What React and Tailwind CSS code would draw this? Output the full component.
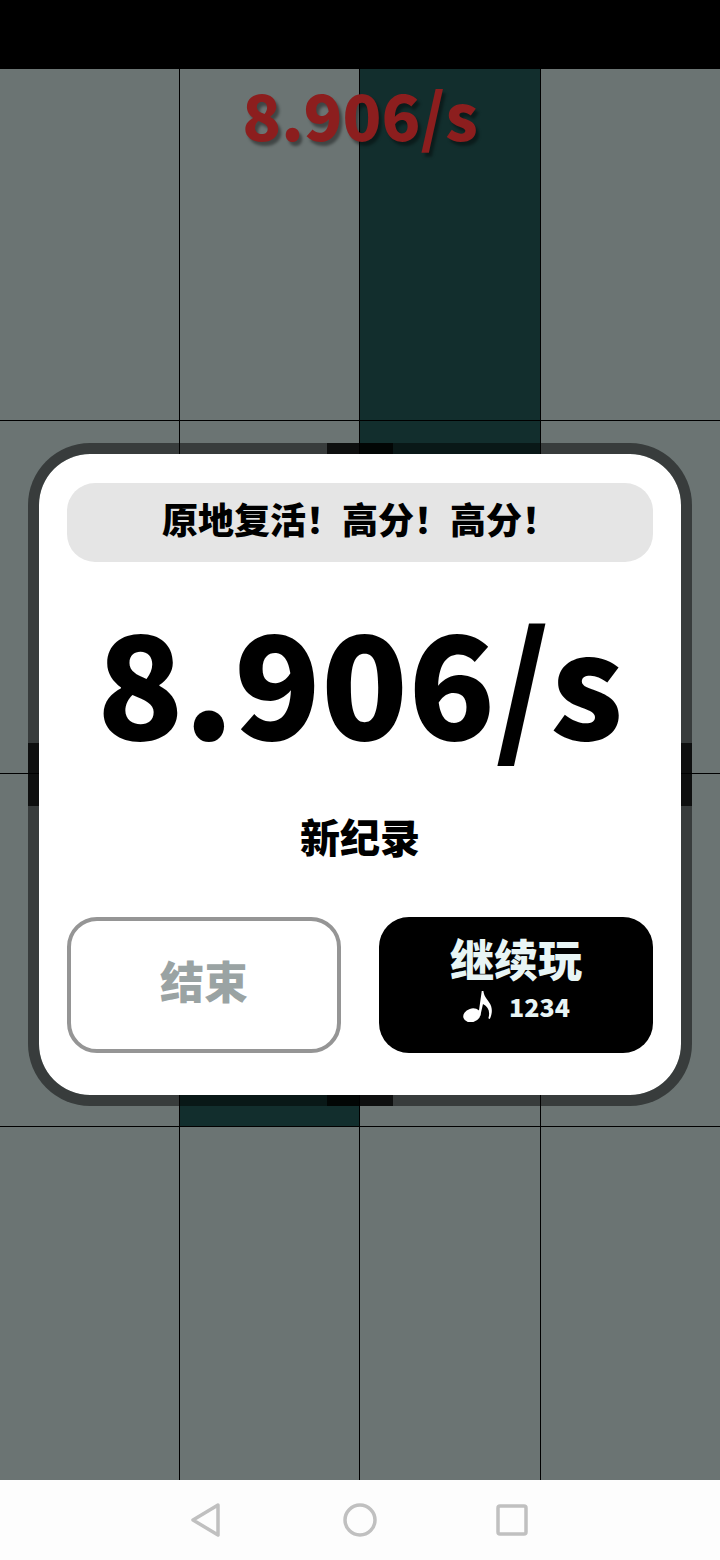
import React from 'react';

const cjk = "font-['Noto_Sans_CJK_SC','Noto_Sans',sans-serif]";

const rows = [
  [0, 0, 1, 0],
  [0, 0, 1, 0],
  [0, 1, 0, 0],
  [0, 0, 0, 0],
];

const Board = () => (
  <div className="grid grid-cols-[180px_180px_181px_179px] grid-rows-[352px_353px_353px_353px] h-[1411px] bg-[#6b7473]">
    {rows.map((row, r) =>
      row.map((dark, c) => (
        <div
          key={`${r}-${c}`}
          className={`border-black ${r < 3 ? 'border-b' : ''} ${c < 3 ? 'border-r' : ''} ${dark ? 'bg-[#122e2d]' : 'bg-[#6b7473]'}`}
        />
      ))
    )}
  </div>
);

const NoteIcon = () => (
  <svg width="30" height="32" viewBox="-0.5 0 29 31" fill="#fff">
    <ellipse cx="9" cy="24.5" rx="8.5" ry="6.5" transform="rotate(-18 9 24.5)" />
    <path d="M15.2 25 L18.6 1 L20.2 1 C20.8 6 23.4 8.5 25.8 12 C28.8 16 29.4 22 26.4 28 L25 27.4 C27 21 25 16.5 19.8 13.6 L17.2 25 Z" />
  </svg>
);

const Modal = () => (
  <div className="absolute left-[28px] top-[443px] w-[664px] h-[663px] rounded-[62px] border-[11px] border-black/[.48] bg-white bg-clip-padding">
    <div className="absolute left-[288px] top-[-11px] w-[66px] h-[11px] bg-black/75" />
    <div className="absolute left-[288px] bottom-[-11px] w-[66px] h-[11px] bg-black/75" />
    <div className="absolute left-[-11px] top-[289px] w-[11px] h-[63px] bg-black/75" />
    <div className="absolute right-[-11px] top-[289px] w-[11px] h-[63px] bg-black/75" />

    <div className={`flex flex-col h-full px-[28px] pt-[29px] ${cjk}`}>
      <div className="flex items-center justify-center h-[79px] pb-[9px] rounded-[28px] bg-[#e5e5e5] text-[36px] font-black text-black">
        原地复活！高分！高分！
      </div>
      <div className="flex items-center justify-center h-[210px] mt-[10px] text-[143px] leading-none font-black text-black">
        8.906/s
      </div>
      <div className="text-center text-[40px] leading-[58px] font-black text-black mt-[25px]">新纪录</div>
      <div className="flex justify-between mt-[52px]">
        <div className="flex items-center justify-center w-[274px] h-[136px] pb-[10px] rounded-[30px] border-4 border-[#959595] text-[44px] font-black text-[#9aa3a3]">
          结束
        </div>
        <div className="flex flex-col items-center justify-center w-[274px] h-[136px] pb-[20px] rounded-[30px] bg-black text-[#e8f5f5]">
          <span className="text-[44px] leading-[62px] font-black">继续玩</span>
          <span className="flex items-center gap-[17px] text-[25px] leading-[34px] font-black">
            <NoteIcon />
            1234
          </span>
        </div>
      </div>
    </div>
  </div>
);

const NavBar = () => (
  <div className="flex items-center justify-center h-[80px] bg-[#fdfdfd]">
    <svg width="400" height="80" viewBox="160 1480 400 80" fill="none" stroke="#c0c0c0" strokeWidth="3.5" strokeLinejoin="round">
      <path d="M218 1505 L193 1520 L218 1535 Z" />
      <circle cx="360" cy="1520" r="15" />
      <rect x="498" y="1506" width="28" height="28" rx="2" />
    </svg>
  </div>
);

export default function App() {
  return (
    <div className="relative w-[720px] h-[1560px] overflow-hidden bg-black">
      <div className="h-[69px] bg-black" />
      <Board />
      <div className={`absolute top-[69px] left-0 right-0 text-center text-[64px] leading-[88px] font-black text-[#8c1e1e] [text-shadow:3px_4px_3px_rgba(0,0,0,0.4)] ${cjk}`}>
        8.906/s
      </div>
      <Modal />
      <NavBar />
    </div>
  );
}
